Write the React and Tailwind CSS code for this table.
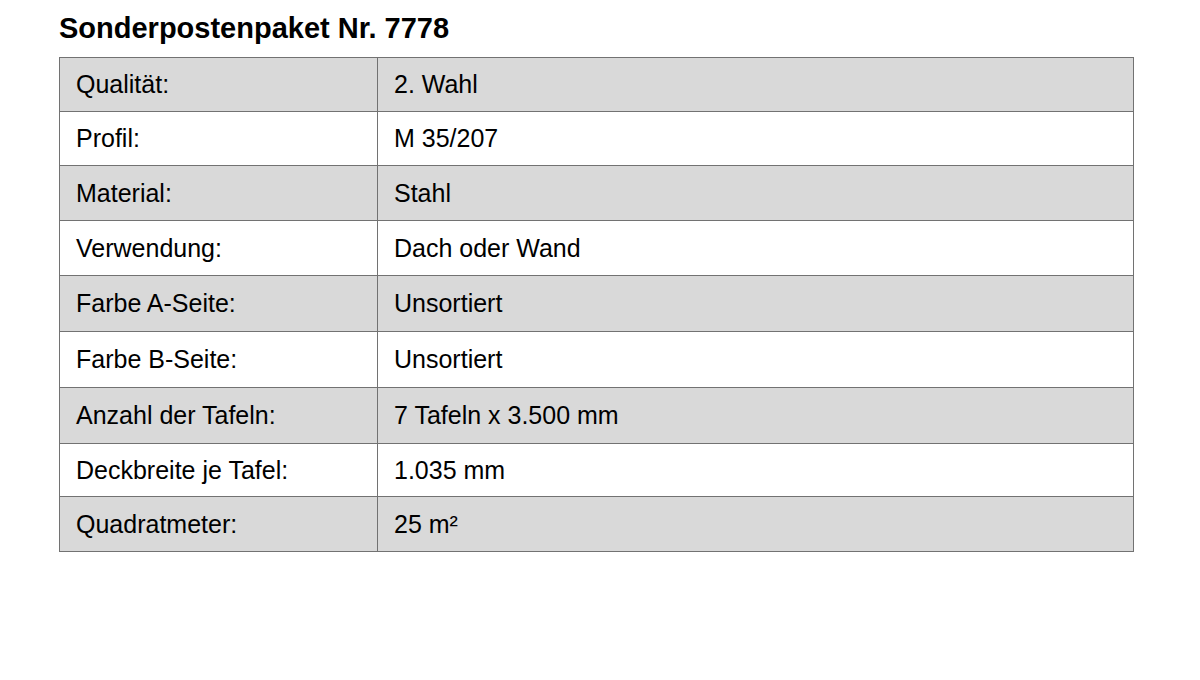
const rows = [
  { label: 'Qualität:', value: '2. Wahl', h: 'h-[54px]', shaded: true },
  { label: 'Profil:', value: 'M 35/207', h: 'h-[54px]', shaded: false },
  { label: 'Material:', value: 'Stahl', h: 'h-[55px]', shaded: true },
  { label: 'Verwendung:', value: 'Dach oder Wand', h: 'h-[55px]', shaded: false },
  { label: 'Farbe A-Seite:', value: 'Unsortiert', h: 'h-[56px]', shaded: true },
  { label: 'Farbe B-Seite:', value: 'Unsortiert', h: 'h-[56px]', shaded: false },
  { label: 'Anzahl der Tafeln:', value: '7 Tafeln x 3.500 mm', h: 'h-[56px]', shaded: true },
  { label: 'Deckbreite je Tafel:', value: '1.035 mm', h: 'h-[53px]', shaded: false },
  { label: 'Quadratmeter:', value: '25 m²', h: 'h-[55px]', shaded: true },
];

export default function App() {
  return (
    <div className="w-[1200px] h-[680px] bg-white text-black font-['Liberation_Sans',Arial,sans-serif] pl-[59px] pt-[11px]">
      <h1 className="text-[29px] leading-[34px] font-bold mb-[12px]">Sonderpostenpaket Nr. 7778</h1>

      <div className="w-[1075px] border-t border-x border-[#727272]">
        {rows.map((row) => (
          <div
            key={row.label}
            className={`grid grid-cols-[318px_1fr] border-b border-[#727272] ${row.h} ${row.shaded ? 'bg-[#d9d9d9]' : 'bg-white'}`}
          >
            <div className="flex items-center pl-[16px] border-r border-[#727272] text-[25px] leading-[25px]">
              {row.label}
            </div>
            <div className="flex items-center pl-[16px] text-[25px] leading-[25px]">
              {row.value}
            </div>
          </div>
        ))}
      </div>
    </div>
  );
}
